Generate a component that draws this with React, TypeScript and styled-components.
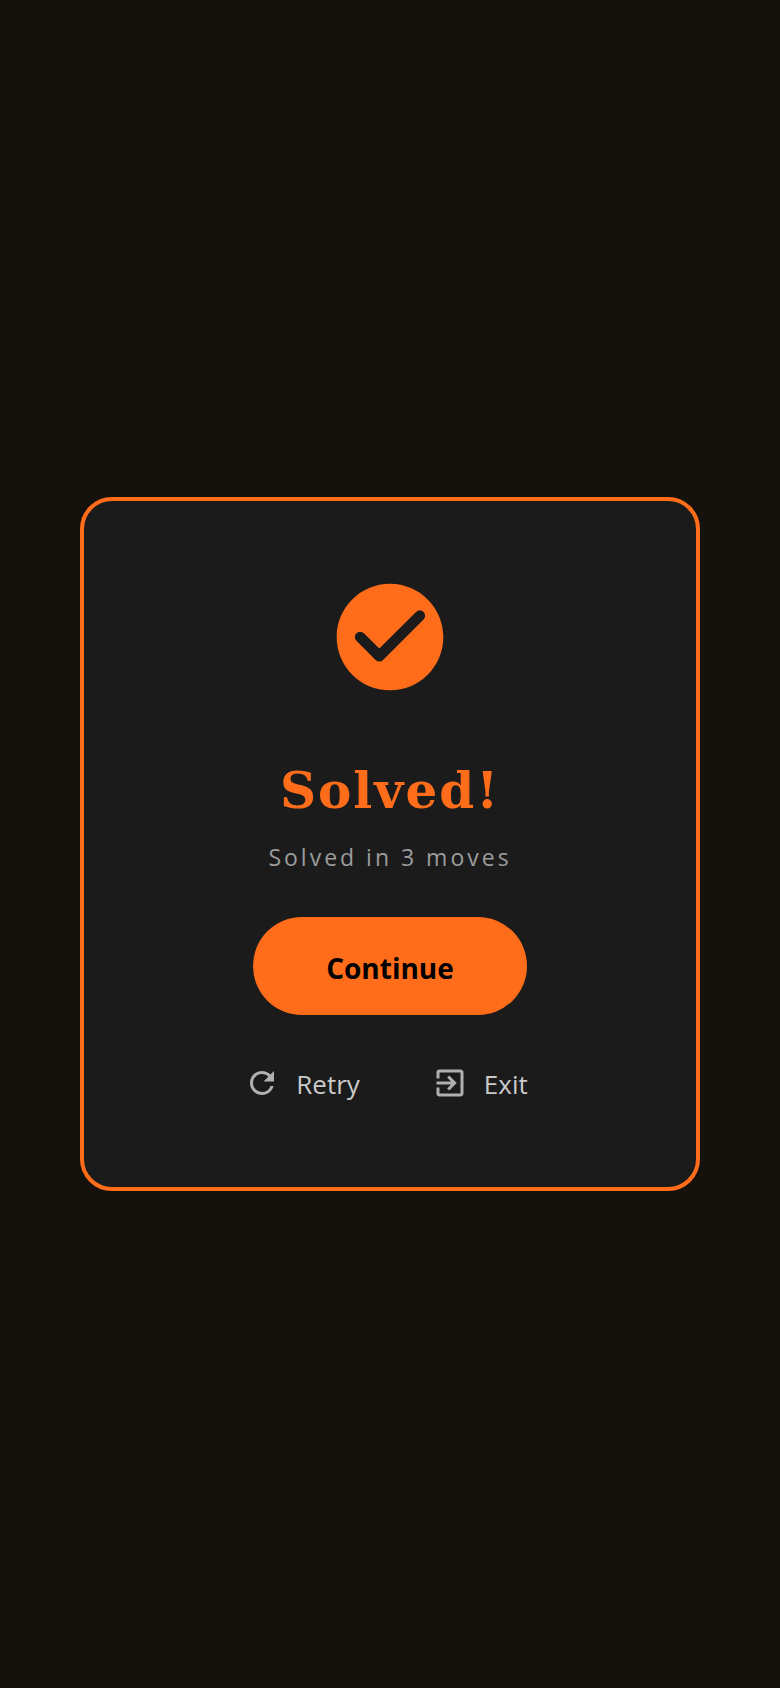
import React from "react";
import styled, { createGlobalStyle } from "styled-components";
import { MdExitToApp, MdRefresh } from "react-icons/md";

const GlobalStyle = createGlobalStyle`
  * { box-sizing: border-box; }
  body {
    margin: 0;
    background: #15110c;
    font-family: "Segoe UI", "Open Sans", "Noto Sans", sans-serif;
  }
`;

const Screen = styled.main`
  min-height: 100vh;
  display: flex;
  align-items: center;
  justify-content: center;
  padding: 32px 80px;
`;

const Card = styled.section`
  flex: 1;
  max-width: 800px;
  display: flex;
  flex-direction: column;
  align-items: center;
  padding: 72px 32px 84px;
  border: 4px solid #ff6d1b;
  border-radius: 32px;
  background: #1b1b1b;
`;

const CheckBadge = styled.svg`
  width: 128px;
  height: 128px;
  fill: #ff6d1b;
`;

const Title = styled.h1`
  margin: 54px 0 0;
  color: #ff6d1b;
  font: bold 50px/72px "DejaVu Serif", serif;
  letter-spacing: 2px;
`;

const Summary = styled.p`
  margin: 14px 0 0;
  color: #9c9c9c;
  font-size: 23px;
  line-height: 32px;
  letter-spacing: 3px;
`;

const ContinueButton = styled.button`
  margin-top: 44px;
  min-width: 274px;
  padding: 30px 72px 26px;
  border: 0;
  border-radius: 52px;
  background: #ff6d1b;
  color: #000;
  font: bold 28px/42px "Segoe UI", "Open Sans", "Noto Sans", sans-serif;
  cursor: pointer;
`;

const Actions = styled.div`
  display: flex;
  gap: 72px;
  margin-top: 48px;
  padding-right: 8px;
`;

const ActionButton = styled.button`
  display: flex;
  align-items: center;
  gap: 16px;
  padding: 0;
  border: 0;
  background: none;
  color: #cacaca;
  font: 26px/40px "Segoe UI", "Open Sans", "Noto Sans", sans-serif;
  cursor: pointer;

  svg {
    width: 36px;
    height: 36px;
    color: #b0b0b0;
  }
`;

const ActionLabel = styled.span`
  padding-top: 2px;
  line-height: 38px;
`;

export default function App() {
  return (
    <>
      <GlobalStyle />
      <Screen>
        <Card>
          <CheckBadge viewBox="0 0 24 24" aria-hidden="true">
            <path d="M12 2C6.48 2 2 6.48 2 12s4.48 10 10 10 10-4.48 10-10S17.52 2 12 2zM9.29 16.29L5.7 12.7a.996.996 0 1 1 1.41-1.41L10 14.17l6.88-6.88a.996.996 0 1 1 1.41 1.41l-7.59 7.59a.996.996 0 0 1-1.41 0z" />
          </CheckBadge>
          <Title>Solved!</Title>
          <Summary>Solved in 3 moves</Summary>
          <ContinueButton type="button">Continue</ContinueButton>
          <Actions>
            <ActionButton type="button">
              <MdRefresh aria-hidden="true" />
              <ActionLabel>Retry</ActionLabel>
            </ActionButton>
            <ActionButton type="button">
              <MdExitToApp aria-hidden="true" />
              <ActionLabel>Exit</ActionLabel>
            </ActionButton>
          </Actions>
        </Card>
      </Screen>
    </>
  );
}
